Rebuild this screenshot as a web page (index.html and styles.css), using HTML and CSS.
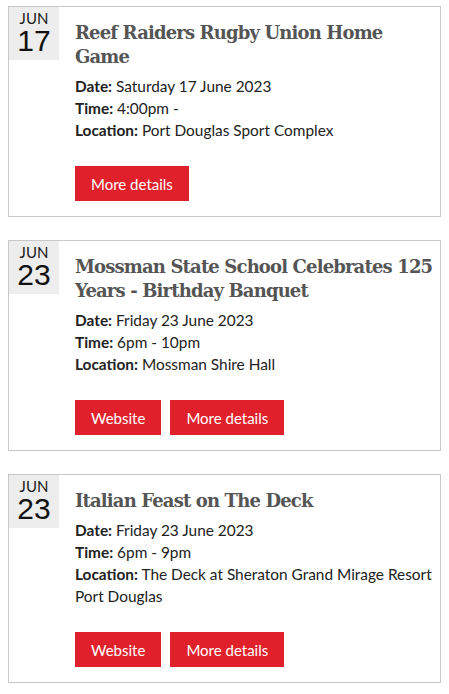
FILE: index.html
```html
<!DOCTYPE html>
<html>
<head>
<meta charset="utf-8">
<link rel="stylesheet" href="styles.css">
</head>
<body>
<div class="events">
  <div class="card">
    <div class="date"><span class="mon">JUN</span><span class="day">17</span></div>
    <div class="content">
      <h2 class="title">Reef Raiders Rugby Union Home Game</h2>
      <div class="details">
        <div><b>Date:</b> Saturday 17 June 2023</div>
        <div><b>Time:</b> 4:00pm -</div>
        <div><b>Location:</b> Port Douglas Sport Complex</div>
      </div>
      <div class="buttons">
        <a class="btn">More details</a>
      </div>
    </div>
  </div>
  <div class="card">
    <div class="date"><span class="mon">JUN</span><span class="day">23</span></div>
    <div class="content">
      <h2 class="title">Mossman State School Celebrates 125 Years - Birthday Banquet</h2>
      <div class="details">
        <div><b>Date:</b> Friday 23 June 2023</div>
        <div><b>Time:</b> 6pm - 10pm</div>
        <div><b>Location:</b> Mossman Shire Hall</div>
      </div>
      <div class="buttons">
        <a class="btn">Website</a>
        <a class="btn">More details</a>
      </div>
    </div>
  </div>
  <div class="card">
    <div class="date"><span class="mon">JUN</span><span class="day">23</span></div>
    <div class="content">
      <h2 class="title">Italian Feast on The Deck</h2>
      <div class="details">
        <div><b>Date:</b> Friday 23 June 2023</div>
        <div><b>Time:</b> 6pm - 9pm</div>
        <div><b>Location:</b> The Deck at Sheraton Grand Mirage Resort Port Douglas</div>
      </div>
      <div class="buttons">
        <a class="btn">Website</a>
        <a class="btn">More details</a>
      </div>
    </div>
  </div>
</div>
</body>
</html>
```
FILE: styles.css
```css
body {
  margin: 6px 8px 0 8px;
  background: #fff;
  font-family: Lato, "Liberation Sans", sans-serif;
  color: #222;
}
.events {
  display: flex;
  flex-direction: column;
  gap: 23px;
}
.card {
  display: flex;
  align-items: flex-start;
  border: 1px solid #c8c8c8;
}
.date {
  flex: 0 0 50px;
  height: 53px;
  background: #ededed;
  display: flex;
  flex-direction: column;
  align-items: center;
}
.mon {
  font-family: Lato, sans-serif;
  font-size: 15px;
  line-height: 15px;
  margin-top: 4px;
  color: #1a1a1a;
}
.day {
  font-family: "Liberation Sans", Arial, sans-serif;
  font-size: 30px;
  line-height: 30px;
  height: 30px;
  color: #111;
}
.content {
  flex: 1;
  padding: 14px 0 15px 16px;
}
.title {
  margin: 0;
  font-family: "DejaVu Serif", serif;
  font-weight: bold;
  font-size: 18px;
  letter-spacing: -0.85px;
  line-height: 24px;
  color: #555;
}
.details {
  margin-top: 6px;
  font-size: 15.4px;
  line-height: 22px;
  color: #222;
}
.details b {
  font-weight: bold;
}
.buttons {
  display: flex;
  gap: 9px;
  margin-top: 25px;
}
.btn {
  display: flex;
  align-items: center;
  height: 35px;
  padding: 0 16px;
  background: #e0212b;
  color: #fff;
  font-size: 15px;
  text-decoration: none;
}
```
